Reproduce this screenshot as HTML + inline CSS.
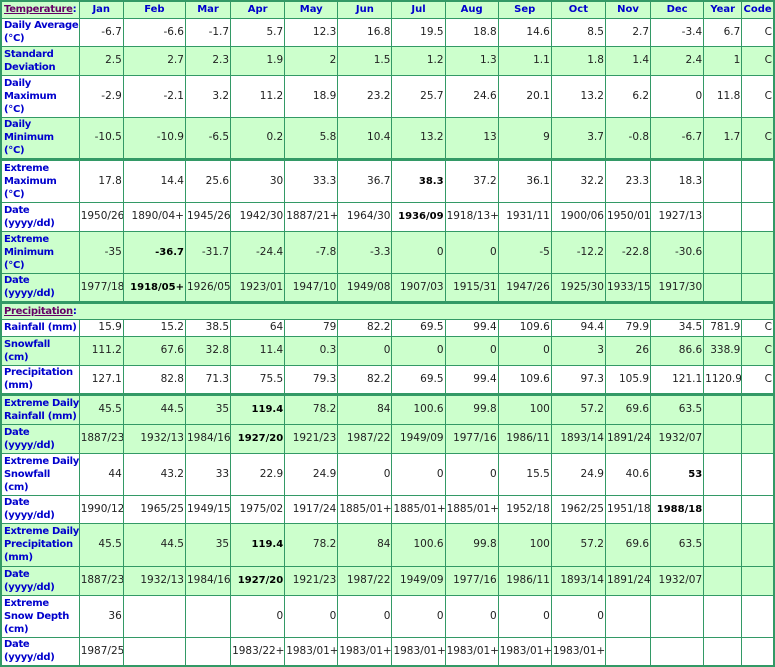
<!DOCTYPE html>
<html><head><meta charset="utf-8"><style>
body{margin:0;background:#fff;}
table{border-collapse:collapse;table-layout:fixed;width:775px;font-family:"DejaVu Sans","Liberation Sans",sans-serif;font-size:10.5px;line-height:13px;color:#222;border:2px solid #339966;}
td,th{border:1px solid #339966;padding:0 1px 0 1px;text-align:right;vertical-align:middle;overflow:hidden;white-space:nowrap;}
th{color:#0000cc;font-weight:bold;text-align:center;font-size:10px;}
td.l{text-align:left;color:#0000cc;font-weight:bold;font-size:10px;letter-spacing:-0.3px;padding-left:2px;}
tr.g{background:#ccffcc;}
tr.s td,tr.s th{border-top:3px solid #339966;}
a{color:#660066;text-decoration:underline;font-weight:bold;}
b{color:#000;font-size:10px;}
</style></head><body>
<table>
<colgroup><col style="width:78px"><col style="width:44px"><col style="width:62px"><col style="width:45px"><col style="width:54px"><col style="width:53px"><col style="width:54px"><col style="width:53px"><col style="width:53px"><col style="width:53px"><col style="width:54px"><col style="width:45px"><col style="width:53px"><col style="width:38px"><col style="width:32px"></colgroup>
<tr class="g" style="height:17px"><td class="l"><a>Temperature</a>:</td><th>Jan</th><th>Feb</th><th>Mar</th><th>Apr</th><th>May</th><th>Jun</th><th>Jul</th><th>Aug</th><th>Sep</th><th>Oct</th><th>Nov</th><th>Dec</th><th>Year</th><th>Code</th></tr>
<tr style="height:28px"><td class="l">Daily Average<br>(°C)</td><td>-6.7</td><td>-6.6</td><td>-1.7</td><td>5.7</td><td>12.3</td><td>16.8</td><td>19.5</td><td>18.8</td><td>14.6</td><td>8.5</td><td>2.7</td><td>-3.4</td><td>6.7</td><td>C</td></tr>
<tr class="g" style="height:29px"><td class="l">Standard<br>Deviation</td><td>2.5</td><td>2.7</td><td>2.3</td><td>1.9</td><td>2</td><td>1.5</td><td>1.2</td><td>1.3</td><td>1.1</td><td>1.8</td><td>1.4</td><td>2.4</td><td>1</td><td>C</td></tr>
<tr style="height:42px"><td class="l">Daily<br>Maximum<br>(°C)</td><td>-2.9</td><td>-2.1</td><td>3.2</td><td>11.2</td><td>18.9</td><td>23.2</td><td>25.7</td><td>24.6</td><td>20.1</td><td>13.2</td><td>6.2</td><td>0</td><td>11.8</td><td>C</td></tr>
<tr class="g" style="height:42px"><td class="l">Daily<br>Minimum<br>(°C)</td><td>-10.5</td><td>-10.9</td><td>-6.5</td><td>0.2</td><td>5.8</td><td>10.4</td><td>13.2</td><td>13</td><td>9</td><td>3.7</td><td>-0.8</td><td>-6.7</td><td>1.7</td><td>C</td></tr>
<tr class="s" style="height:43px"><td class="l">Extreme<br>Maximum<br>(°C)</td><td>17.8</td><td>14.4</td><td>25.6</td><td>30</td><td>33.3</td><td>36.7</td><td><b>38.3</b></td><td>37.2</td><td>36.1</td><td>32.2</td><td>23.3</td><td>18.3</td><td></td><td></td></tr>
<tr style="height:29px"><td class="l">Date<br>(yyyy/dd)</td><td>1950/26</td><td>1890/04+</td><td>1945/26</td><td>1942/30</td><td>1887/21+</td><td>1964/30</td><td><b>1936/09</b></td><td>1918/13+</td><td>1931/11</td><td>1900/06</td><td>1950/01</td><td>1927/13</td><td></td><td></td></tr>
<tr class="g" style="height:42px"><td class="l">Extreme<br>Minimum<br>(°C)</td><td>-35</td><td><b>-36.7</b></td><td>-31.7</td><td>-24.4</td><td>-7.8</td><td>-3.3</td><td>0</td><td>0</td><td>-5</td><td>-12.2</td><td>-22.8</td><td>-30.6</td><td></td><td></td></tr>
<tr class="g" style="height:29px"><td class="l">Date<br>(yyyy/dd)</td><td>1977/18</td><td><b>1918/05+</b></td><td>1926/05</td><td>1923/01</td><td>1947/10</td><td>1949/08</td><td>1907/03</td><td>1915/31</td><td>1947/26</td><td>1925/30</td><td>1933/15</td><td>1917/30</td><td></td><td></td></tr>
<tr class="g s" style="height:17px"><td class="l" colspan="15"><a>Precipitation</a>:</td></tr>
<tr style="height:17px"><td class="l">Rainfall (mm)</td><td>15.9</td><td>15.2</td><td>38.5</td><td>64</td><td>79</td><td>82.2</td><td>69.5</td><td>99.4</td><td>109.6</td><td>94.4</td><td>79.9</td><td>34.5</td><td>781.9</td><td>C</td></tr>
<tr class="g" style="height:29px"><td class="l">Snowfall<br>(cm)</td><td>111.2</td><td>67.6</td><td>32.8</td><td>11.4</td><td>0.3</td><td>0</td><td>0</td><td>0</td><td>0</td><td>3</td><td>26</td><td>86.6</td><td>338.9</td><td>C</td></tr>
<tr style="height:29px"><td class="l">Precipitation<br>(mm)</td><td>127.1</td><td>82.8</td><td>71.3</td><td>75.5</td><td>79.3</td><td>82.2</td><td>69.5</td><td>99.4</td><td>109.6</td><td>97.3</td><td>105.9</td><td>121.1</td><td>1120.9</td><td>C</td></tr>
<tr class="g s" style="height:30px"><td class="l">Extreme Daily<br>Rainfall (mm)</td><td>45.5</td><td>44.5</td><td>35</td><td><b>119.4</b></td><td>78.2</td><td>84</td><td>100.6</td><td>99.8</td><td>100</td><td>57.2</td><td>69.6</td><td>63.5</td><td></td><td></td></tr>
<tr class="g" style="height:29px"><td class="l">Date<br>(yyyy/dd)</td><td>1887/23</td><td>1932/13</td><td>1984/16</td><td><b>1927/20</b></td><td>1921/23</td><td>1987/22</td><td>1949/09</td><td>1977/16</td><td>1986/11</td><td>1893/14</td><td>1891/24</td><td>1932/07</td><td></td><td></td></tr>
<tr style="height:42px"><td class="l">Extreme Daily<br>Snowfall<br>(cm)</td><td>44</td><td>43.2</td><td>33</td><td>22.9</td><td>24.9</td><td>0</td><td>0</td><td>0</td><td>15.5</td><td>24.9</td><td>40.6</td><td><b>53</b></td><td></td><td></td></tr>
<tr style="height:28px"><td class="l">Date<br>(yyyy/dd)</td><td>1990/12</td><td>1965/25</td><td>1949/15</td><td>1975/02</td><td>1917/24</td><td>1885/01+</td><td>1885/01+</td><td>1885/01+</td><td>1952/18</td><td>1962/25</td><td>1951/18</td><td><b>1988/18</b></td><td></td><td></td></tr>
<tr class="g" style="height:43px"><td class="l">Extreme Daily<br>Precipitation<br>(mm)</td><td>45.5</td><td>44.5</td><td>35</td><td><b>119.4</b></td><td>78.2</td><td>84</td><td>100.6</td><td>99.8</td><td>100</td><td>57.2</td><td>69.6</td><td>63.5</td><td></td><td></td></tr>
<tr class="g" style="height:29px"><td class="l">Date<br>(yyyy/dd)</td><td>1887/23</td><td>1932/13</td><td>1984/16</td><td><b>1927/20</b></td><td>1921/23</td><td>1987/22</td><td>1949/09</td><td>1977/16</td><td>1986/11</td><td>1893/14</td><td>1891/24</td><td>1932/07</td><td></td><td></td></tr>
<tr style="height:42px"><td class="l">Extreme<br>Snow Depth<br>(cm)</td><td>36</td><td></td><td></td><td>0</td><td>0</td><td>0</td><td>0</td><td>0</td><td>0</td><td>0</td><td></td><td></td><td></td><td></td></tr>
<tr style="height:29px"><td class="l">Date<br>(yyyy/dd)</td><td>1987/25</td><td></td><td></td><td>1983/22+</td><td>1983/01+</td><td>1983/01+</td><td>1983/01+</td><td>1983/01+</td><td>1983/01+</td><td>1983/01+</td><td></td><td></td><td></td><td></td></tr>
</table>
</body></html>
